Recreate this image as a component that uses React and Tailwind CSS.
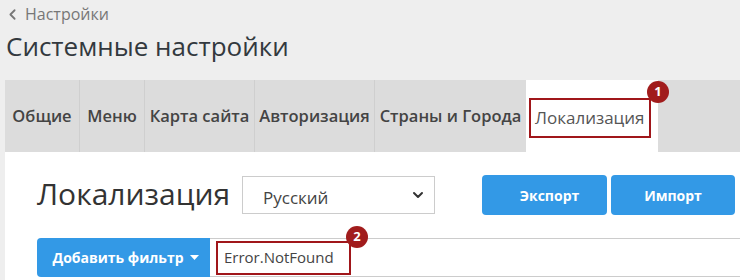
import { ChevronDown, ChevronLeft } from 'lucide-react'

const tabs = [
  { label: 'Общие', w: 'w-[75px]' },
  { label: 'Меню', w: 'w-[65px]' },
  { label: 'Карта сайта', w: 'w-[110px]' },
  { label: 'Авторизация', w: 'w-[120px]' },
  { label: 'Страны и Города', w: 'w-[152px]' },
]

const Badge = ({ n, className }) => (
  <span
    className={`absolute flex items-center justify-center w-[22px] h-[22px] rounded-full bg-[#a11c1c] text-white text-[13px] font-bold leading-none ${className}`}
  >
    {n}
  </span>
)

export default function App() {
  return (
    <div
      className="w-[740px] h-[280px] overflow-hidden bg-[#eeeeee] text-[#333]"
      style={{ fontFamily: '"Open Sans", "Noto Sans", sans-serif' }}
    >
      {/* Breadcrumb */}
      <div className="flex items-center gap-[4px] pl-[4px] h-[28px] text-[16px] text-[#777]">
        <ChevronLeft size={17} strokeWidth={2.5} />
        <span>Настройки</span>
      </div>

      {/* Page title */}
      <h1 className="pl-[6px] h-[52px] text-[26px] leading-[36px] text-[#33393e]">
        Системные настройки
      </h1>

      {/* Tabs */}
      <div className="ml-[5px] flex h-[72px] bg-[#dcdcdc]">
        {tabs.map((t) => (
          <div
            key={t.label}
            className={`${t.w} flex items-center justify-center border-r border-[#cfcfcf] text-[16.5px] font-semibold text-[#444] whitespace-nowrap`}
          >
            {t.label}
          </div>
        ))}
        <div className="relative w-[132px] -ml-px bg-white flex items-center pl-[3px]">
          <div className="relative w-[122px] h-[40px] mt-[3px] border-2 border-[#a0161a] flex items-center pl-[4px] text-[17px] text-[#555] whitespace-nowrap">
            Локализация
            <Badge n="1" className="-top-[19px] -right-[20px]" />
          </div>
        </div>
      </div>

      {/* Content */}
      <div className="ml-[5px] bg-white h-[128px] pl-[32px]">
        <div className="flex items-center h-[86px]">
          <h2 className="text-[30px] text-[#333] leading-none w-[205px] pb-[2px]">Локализация</h2>
          <div className="w-[193px] h-[38px] border border-[#cccccc] flex items-center justify-between pl-[20px] pr-[8px] text-[17px] text-[#444]">
            <span className="pt-[6px]">Русский</span>
            <ChevronDown size={16} strokeWidth={3} className="text-[#333]" />
          </div>
          <div className="flex gap-[4px] ml-[47px]">
            <button className="w-[125px] h-[40px] rounded-[4px] bg-[#3399e6] text-white text-[14px] font-bold pl-[10px]">
              Экспорт
            </button>
            <button className="w-[124px] h-[40px] rounded-[4px] bg-[#3399e6] text-white text-[14px] font-bold">
              Импорт
            </button>
          </div>
        </div>
        <div className="flex h-[39px]">
          <button className="w-[173px] h-[39px] rounded-l-[4px] bg-[#3399e6] text-white text-[14px] font-bold flex items-center justify-center gap-[6px] pl-[4px]">
            Добавить фильтр
            <svg width="9" height="5" viewBox="0 0 9 5">
              <path d="M0 0h9L4.5 5z" fill="white" />
            </svg>
          </button>
          <div className="flex-1 border-y border-[#cccccc] pl-[6px] flex items-center">
            <div className="relative w-[135px] h-[34px] border-2 border-[#a0161a] flex items-center pl-[6px] text-[15px] text-[#444] whitespace-nowrap">
              Error.NotFound
              <Badge n="2" className="-top-[17px] -right-[19px]" />
            </div>
          </div>
        </div>
      </div>
    </div>
  )
}
